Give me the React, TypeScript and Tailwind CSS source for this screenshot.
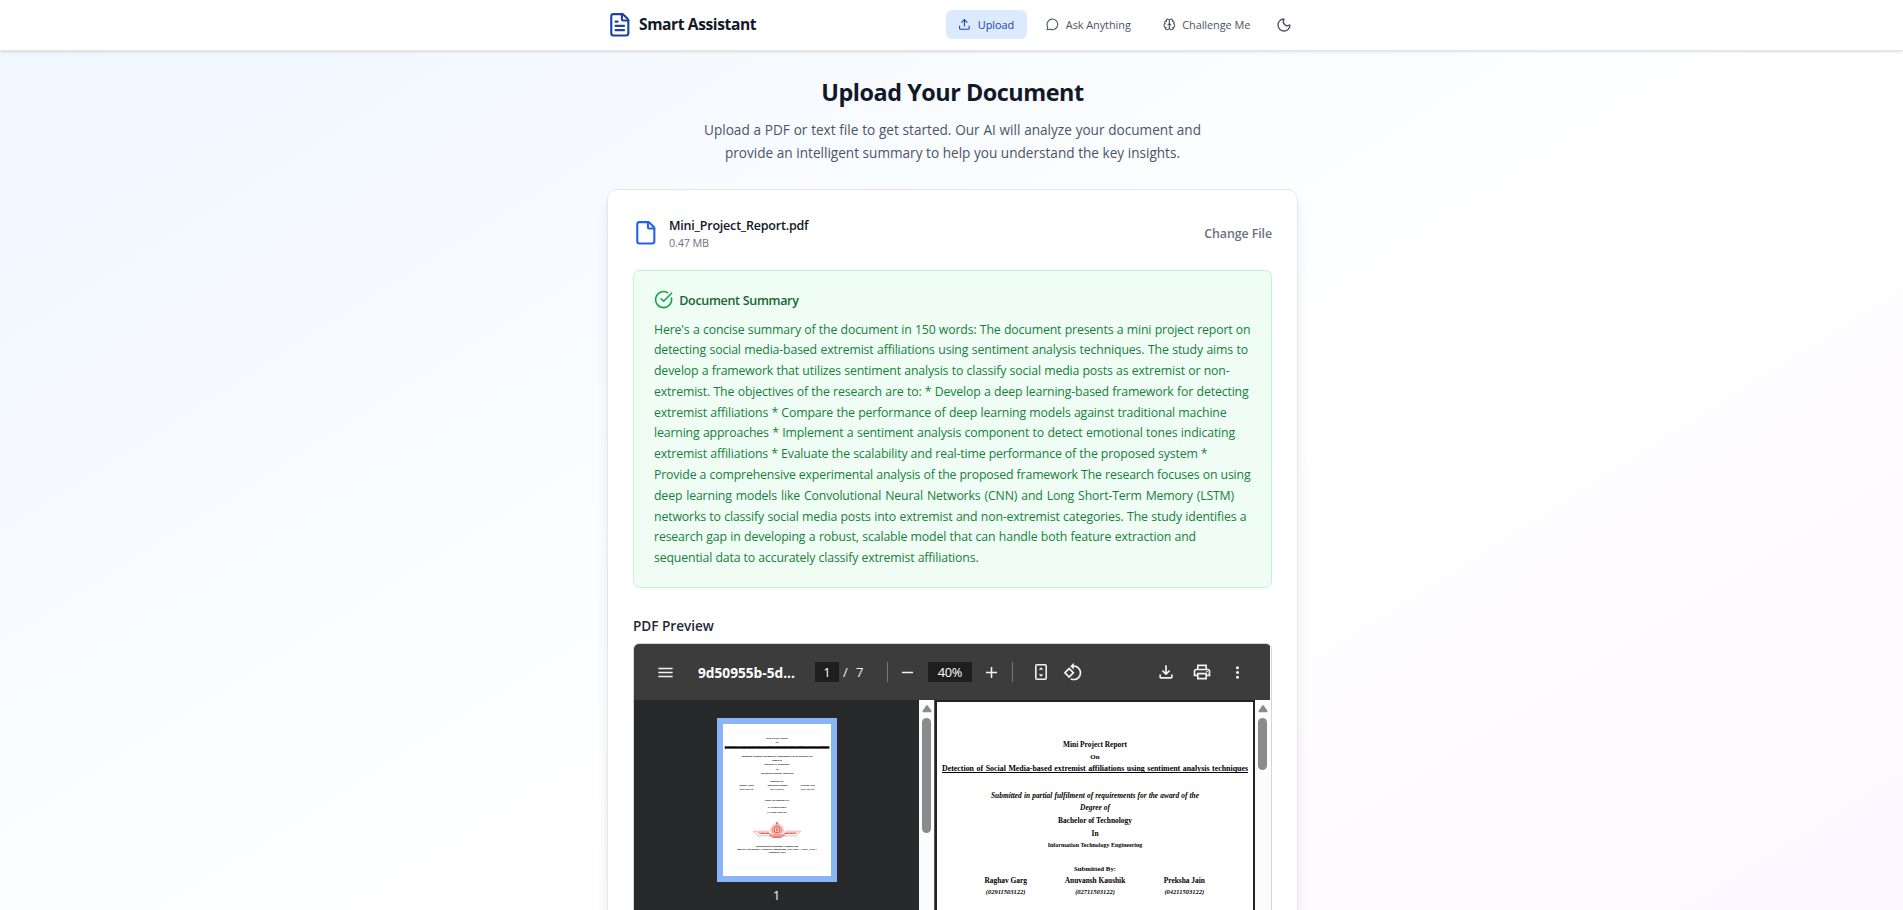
import { Upload, MessageCircle, Brain, Moon, FileText, File, CircleCheckBig } from "lucide-react";
import {
  MdMenu,
  MdAdd,
  MdRemove,
  MdOutlineFileDownload,
  MdOutlinePrint,
  MdMoreVert,
  MdRotate90DegreesCcw,
} from "react-icons/md";

const summary = [
  { w: "w-[596.5px]", t: "Here's a concise summary of the document in 150 words: The document presents a mini project report on" },
  { w: "w-[594px]", t: "detecting social media-based extremist affiliations using sentiment analysis techniques. The study aims to" },
  { w: "w-[575.5px]", t: "develop a framework that utilizes sentiment analysis to classify social media posts as extremist or non-" },
  { w: "w-[594.5px]", t: "extremist. The objectives of the research are to: * Develop a deep learning-based framework for detecting" },
  { w: "w-[572.5px]", t: "extremist affiliations * Compare the performance of deep learning models against traditional machine" },
  { w: "w-[581px]", t: "learning approaches * Implement a sentiment analysis component to detect emotional tones indicating" },
  { w: "w-[553.5px]", t: "extremist affiliations * Evaluate the scalability and real-time performance of the proposed system *" },
  { w: "w-[596.5px]", t: "Provide a comprehensive experimental analysis of the proposed framework The research focuses on using" },
  { w: "w-[580px]", t: "deep learning models like Convolutional Neural Networks (CNN) and Long Short-Term Memory (LSTM)" },
  { w: "w-[592.5px]", t: "networks to classify social media posts into extremist and non-extremist categories. The study identifies a" },
  { w: "w-[542px]", t: "research gap in developing a robust, scalable model that can handle both feature extraction and" },
  { w: "w-[324.5px]", t: "sequential data to accurately classify extremist affiliations." },
];

const students = [
  { name: "Raghav Garg", roll: "(02911503122)" },
  { name: "Anuvansh Kaushik", roll: "(02711503122)" },
  { name: "Preksha Jain", roll: "(04211503122)" },
];

function Header() {
  return (
    <header className="h-[51px] shrink-0 border-b border-[#e5e7eb] bg-white shadow-sm">
      <div className="mx-auto flex h-[50px] w-[691px] translate-x-px items-center justify-between pb-[11px] pt-[10px]">
        <div className="flex items-center">
          <FileText className="size-[25.6px] text-[#1e40af]" />
          <span className="ml-[6.4px] pt-px text-[15.6px] font-bold leading-none tracking-[-0.4px] text-[#111827]">Smart Assistant</span>
        </div>
        <nav className="flex items-center text-[10.9px] leading-none tracking-[-0.05px] text-[#4b5563]">
          <button className="flex h-[29px] w-[81px] items-center rounded-[6.4px] bg-[#dbeafe] pl-[12px] font-medium text-[#1e40af]">
            <Upload className="size-[12.8px]" />
            <span className="ml-[7px] pt-px">Upload</span>
          </button>
          <button className="ml-[6px] flex h-[29px] w-[112px] items-center pl-[13px]">
            <MessageCircle className="size-[12.8px]" />
            <span className="ml-[7px] whitespace-nowrap pt-px">Ask Anything</span>
          </button>
          <button className="ml-[6px] flex h-[29px] w-[112px] items-center pl-[12px]">
            <Brain className="size-[12.8px]" />
            <span className="ml-[6.4px] whitespace-nowrap pt-px">Challenge Me</span>
          </button>
          <button className="ml-[6px] flex size-[29px] items-center justify-center">
            <Moon className="size-4" />
          </button>
        </nav>
      </div>
    </header>
  );
}

function Emblem() {
  return (
    <svg viewBox="0 0 144 50" className="h-[49px] w-[140px]" fill="none" stroke="#e5453c" strokeWidth="2">
      <path d="M1 29h48M95 29h48M1 29l13 14h38M143 29l-13 14H92M12 33h35l6 7M132 33H97l-6 7" strokeWidth="1.2" />
      <circle cx="72" cy="26" r="19" strokeDasharray="2 2" />
      <circle cx="72" cy="26" r="15" fill="#f8c9c5" />
      <circle cx="72" cy="25" r="9" fill="#fff" strokeWidth="3" />
      <path d="M72 0v9M70 5h4M72 18v14M67 25h10" strokeWidth="3" />
      <path d="M50 36c6 10 38 10 44 0v7c-8 6-36 6-44 0z" fill="#f39a94" strokeWidth="1" />
      <path d="M19 36h30M95 36h34" strokeWidth="3.5" strokeDasharray="3 .8" />
      <path d="M58 48h28" />
    </svg>
  );
}

function ReportFooter() {
  return (
    <>
      <p className="mt-[21.3px]">Under the guidance of:</p>
      <p className="mt-[10.7px] text-[6.5px]">Dr. Mahesh Kumar</p>
      <p className="mt-[3.3px] text-[6.5px]">(Assistant Professor)</p>
      <div className="mt-[21.5px]">
        <Emblem />
      </div>
      <p className="mt-[18.2px] text-[7.8px] leading-[9px]">Information Technology Engineering</p>
      <p className="text-[7.5px] leading-[9px]">Bharati Vidyapeeth's College of Engineering, New Delhi - 110063, INDIA</p>
      <p className="text-[7.5px] leading-[9px]">September 2024</p>
    </>
  );
}

function ReportPage({ underline, footer }: { underline: string; footer?: boolean }) {
  return (
    <div className="flex h-[446px] w-[316px] flex-col items-center whitespace-nowrap bg-white font-['Liberation_Serif',serif] text-[7.4px] font-bold leading-[11px] text-black">
      <p className="mt-[37px]">Mini Project Report</p>
      <p className="mt-[1.7px] text-[7px]">On</p>
      <p className={underline}>Detection of Social Media-based extremist affiliations using sentiment analysis techniques</p>
      <p className="mt-[15.3px] w-[208px] italic [text-align-last:justify]">
        Submitted in partial fulfilment of requirements for the award of the
      </p>
      <p className="mt-[1.7px] italic">Degree of</p>
      <p className="mt-[2px]">Bachelor of Technology</p>
      <p className="mt-[2px]">In</p>
      <p className="mt-[0.6px] text-[6px]">Information Technology Engineering</p>
      <p className="mt-[12.2px] text-[6.8px]">Submitted By:</p>
      <div className="mt-[1.2px] grid w-[268px] grid-cols-3 text-center">
        {students.map((s) => (
          <div key={s.roll}>
            <p>{s.name}</p>
            <p className="text-[6.5px] italic">{s.roll}</p>
          </div>
        ))}
      </div>
      {footer && <ReportFooter />}
    </div>
  );
}

function ScrollTrack({ thumb }: { thumb: string }) {
  return (
    <div className="flex w-[15px] shrink-0 flex-col items-center bg-[#fcfcfc] pt-[5px]">
      <svg viewBox="0 0 10 8" className="h-[8px] w-[10px]" fill="#8b8b8b">
        <path d="M4.2.6a1 1 0 0 1 1.6 0l3.6 5.2c.5.7 0 1.4-.8 1.4H1.400C.6 7.200.1 6.500.6 5.800z" />
      </svg>
      <div className={thumb} />
    </div>
  );
}

function PdfToolbar() {
  return (
    <div className="flex h-[56px] items-center bg-[#3c3c3c] text-[13px] leading-none text-[#f1f1f1]">
      <MdMenu className="ml-[22px] size-[19px]" />
      <span className="ml-[23px] w-[117px] whitespace-nowrap pt-px text-[13.7px] font-bold text-white">9d50955b-5d...</span>
      <span className="flex h-5 w-6 items-center justify-center bg-[#1e1e1e] text-white">1</span>
      <span className="ml-[4px] w-[5px]">/</span>
      <span className="ml-[8px] w-[8px]">7</span>
      <span className="ml-[23px] h-5 w-px bg-[#757575]" />
      <MdRemove className="ml-[10px] size-[19px]" />
      <span className="ml-[11px] flex h-5 w-[44px] items-center justify-center bg-[#1e1e1e] text-[12.8px] tracking-[-0.3px] text-white">40%</span>
      <MdAdd className="ml-[10px] size-[19px]" />
      <span className="ml-[11px] h-5 w-px bg-[#757575]" />
      <svg viewBox="0 0 12 16" className="ml-[22px] h-4 w-3" fill="none" stroke="currentColor" strokeWidth="1.6">
        <rect x=".8" y=".8" width="10.4" height="14.4" rx="1" />
        <path d="M6 3.200 8.200 5.800H3.800zM6 12.800 8.200 10.200H3.800z" fill="currentColor" stroke="none" />
      </svg>
      <MdRotate90DegreesCcw className="ml-[16px] size-[20px]" />
      <MdOutlineFileDownload className="ml-[73px] size-[20px]" />
      <MdOutlinePrint className="ml-[16px] size-[20px]" />
      <MdMoreVert className="ml-[16px] size-[19px]" />
    </div>
  );
}

function PdfViewer() {
  return (
    <div className="mt-[7px] h-[480px] overflow-hidden rounded-[6px] border border-[#d1d5db] bg-white">
      <div className="w-[636px]">
        <PdfToolbar />
        <div className="flex h-[422px]">
          <div className="flex w-[285px] flex-col items-center bg-[#28292a] pt-[18px]">
            <div className="h-[164px] w-[120px] bg-[#8ab4f8] p-[6px]">
              <div className="h-[152px] w-[108px] overflow-hidden bg-white">
                <div className="origin-top-left scale-[0.342]">
                  <ReportPage
                    footer
                    underline="mt-[0.7px] h-[11px] w-[306px] border-b-[6px] border-black text-[7.9px] leading-[6px] [text-align-last:justify]"
                  />
                </div>
              </div>
            </div>
            <span className="mt-[7px] text-[12.500px] leading-[14px] text-white">1</span>
          </div>
          <ScrollTrack thumb="mt-[5px] h-[115px] w-[9px] rounded-full bg-[#8b8b8b]" />
          <div className="flex-1 border-l border-[#525659] bg-[#232324] pl-[2px] pt-[2px]">
            <ReportPage underline="mt-[0.7px] w-[306px] text-[7.9px] underline decoration-1 [text-align-last:justify]" />
          </div>
          <ScrollTrack thumb="mt-[5px] h-[52px] w-[9px] rounded-full bg-[#8b8b8b]" />
        </div>
      </div>
    </div>
  );
}

export default function App() {
  return (
    <div className="h-[910px] overflow-hidden font-['Open_Sans','Noto_Sans',sans-serif]">
      <div className="flex h-[1200px] flex-col bg-linear-to-br from-[#eff6ff] via-white to-[#faf5ff]">
        <Header />
        <main className="mx-auto w-[691px] translate-x-px">
          <h1 className="mt-[25px] text-center text-[23.4px] font-bold leading-[32px] tracking-[-0.47px] text-[#111827]">
            Upload Your Document
          </h1>
          <div className="mt-[10px] flex flex-col items-center whitespace-nowrap text-[13.6px] leading-[23px] text-[#4b5563]">
            <p className="w-[497px] [text-align-last:justify]">Upload a PDF or text file to get started. Our AI will analyze your document and</p>
            <p className="w-[455px] [text-align-last:justify]">provide an intelligent summary to help you understand the key insights.</p>
          </div>
          <section className="mt-[25px] h-[980px] rounded-[10px] border border-[#e5e7eb] bg-white px-[25px] pt-[25px] shadow-lg">
            <div className="flex h-[36px] items-center justify-between">
              <div className="flex items-center">
                <File className="size-[25.6px] text-[#2563eb]" />
                <div className="ml-[10.4px]">
                  <p className="text-[12.5px] font-semibold leading-[19px] tracking-[-0.2px] text-[#111827]">Mini_Project_Report.pdf</p>
                  <p className="text-[10.8px] leading-[16px] tracking-[-0.15px] text-[#6b7280]">0.47 MB</p>
                </div>
              </div>
              <button className="pt-[2px] text-[12.4px] font-semibold tracking-[-0.08px] text-[#6b7280]">Change File</button>
            </div>
            <div className="mt-[19px] h-[318px] rounded-[6.4px] border border-[#bbf7d0] bg-[#f0fdf4] px-[20px] pt-[19px]">
              <div className="flex items-center text-[#166534]">
                <CircleCheckBig className="size-[19.2px] text-[#16a34a]" />
                <h2 className="ml-[6px] pt-px text-[12.5px] font-semibold leading-[19px] tracking-[-0.3px]">Document Summary</h2>
              </div>
              <div className="mt-[9.5px] whitespace-nowrap text-[12.3px] leading-[20.8px] tracking-[-0.15px] text-[#15803d]">
                {summary.map((line) => (
                  <p key={line.t} className={`${line.w} [text-align-last:justify]`}>{line.t}</p>
                ))}
              </div>
            </div>
            <h3 className="mt-[28px] text-[13.6px] font-semibold leading-[20px] tracking-[-0.02px] text-[#1f2937]">PDF Preview</h3>
            <PdfViewer />
          </section>
        </main>
      </div>
    </div>
  );
}
